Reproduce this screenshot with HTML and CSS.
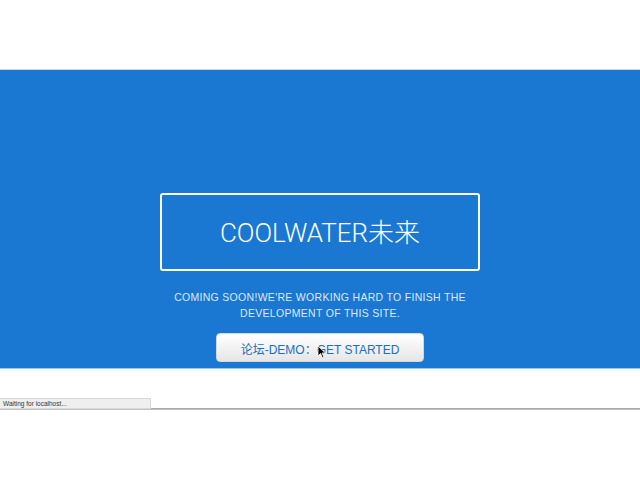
FILE: index.html
```html
<!DOCTYPE html>
<html>
<head>
<meta charset="utf-8">
<link rel="stylesheet" href="styles.css">
</head>
<body>
<div class="top"></div>
<section class="hero">
  <div class="title-box"><h1 class="title">COOLWATER未来</h1></div>
  <p class="sub">Coming soon!We're working hard to finish the development of this site.</p>
  <a class="btn">论坛-DEMO：GET STARTED
    <svg class="cursor" width="10" height="14" viewBox="0 0 10 14"><path d="M1 1 L1 11 L3.5 8.5 L5.5 13 L7 12.3 L5 8 L8.5 8 Z" fill="#000" stroke="#fff" stroke-width="0.8"/></svg>
  </a>
</section>
<div class="after"></div>
<div class="bottom-line"></div>
<div class="status">Waiting for localhost...</div>
</body>
</html>
```
FILE: styles.css
```css
html, body { margin: 0; padding: 0; background: #fff; }
body { width: 640px; height: 480px; position: relative; overflow: hidden; font-family: "Liberation Sans", "Noto Sans CJK SC", sans-serif; }
.top { height: 69px; border-bottom: 1px solid #d4d4d4; }
.hero {
  height: 299px;
  background: #1a77d2;
  border-bottom: 1px solid #9cc8ef;
  display: flex; flex-direction: column; align-items: center;
  padding-top: 123px; box-sizing: border-box;
}
.title-box {
  width: 320px; height: 78px; box-sizing: border-box;
  border: 2px solid #fff; border-radius: 3px;
  display: flex; align-items: center; justify-content: center;
  padding-bottom: 3px;
}
.title {
  margin: 0; color: #fff; font-family: "Roboto", "Noto Sans CJK SC", sans-serif;
  font-weight: 300; font-size: 26px; letter-spacing: 0;
}
.sub {
  margin: 18px 0 0; width: 296px; text-align: center; text-transform: uppercase;
  color: #dce9f7; font-size: 10.5px; line-height: 16px; letter-spacing: 0.3px;
}
.btn {
  margin-top: 12px; width: 208px; height: 29px; box-sizing: border-box;
  border-radius: 4px; background: linear-gradient(#ffffff, #e6e6e6);
  border: 1px solid #d6d6d6;
  color: #1d6ec0; font-size: 12px; display: flex; align-items: center; justify-content: center;
  position: relative; cursor: default; padding-top: 1px;
}
.cursor { position: absolute; left: 100px; top: 11px; }
.after { height: 39px; }
.bottom-line { height: 2px; background: linear-gradient(#9a9a9a, #cfcfcf); }
.status {
  position: absolute; left: 0; top: 398px; width: 151px; height: 11px;
  background: #efefef; border: 1px solid #d8d8d8; border-left: 0; box-sizing: border-box;
  font-size: 6.5px; color: #333; line-height: 10px; padding-left: 3px;
}
```
